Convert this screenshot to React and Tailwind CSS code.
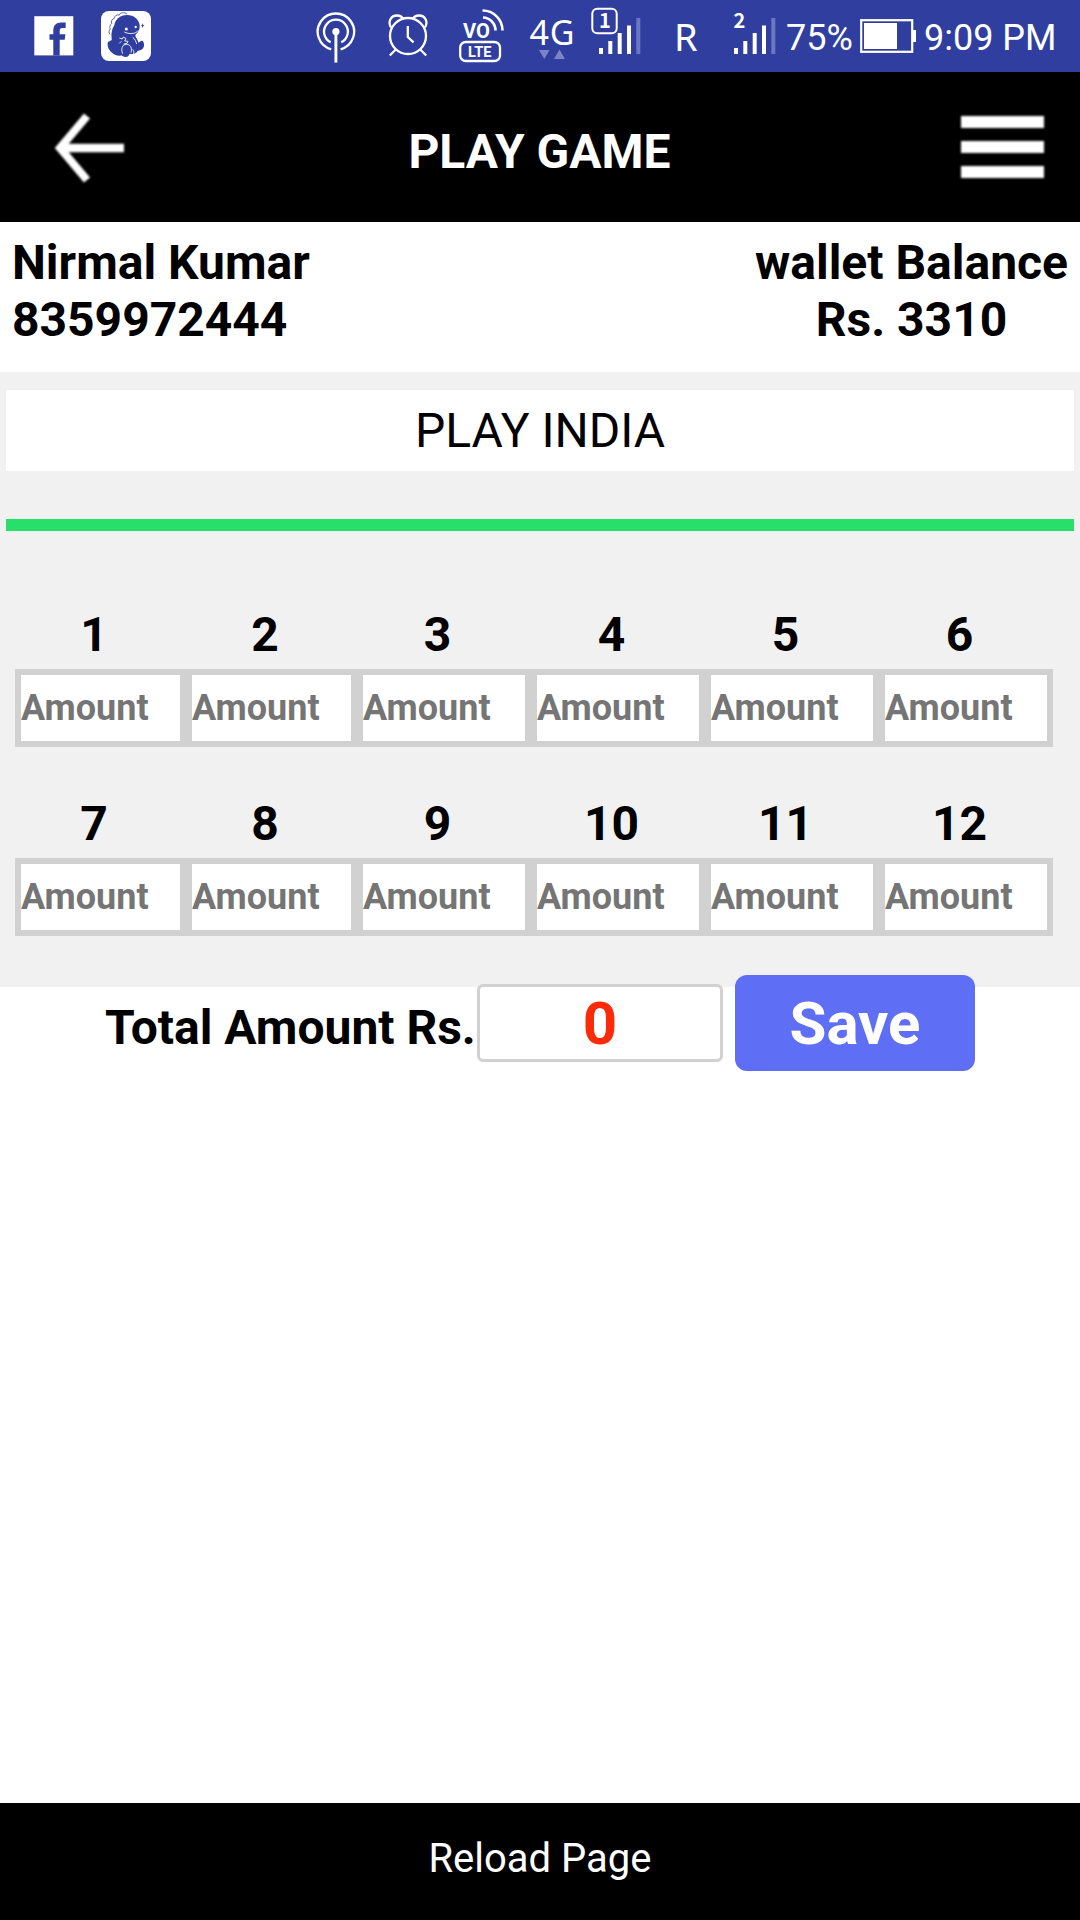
import React, { useState } from 'react';

const FacebookIcon = () => (
    <svg className="ml-[34px] h-[72px] w-10 shrink-0" viewBox="34 0 40 72">
        <rect x="34.3" y="16.2" width="39" height="39.2" fill="#fff" />
        <path
            d="M53.3 55.5V39.8h-3.8v-5.6h3.8v-3.4c0-5.4 2.8-8.4 7.8-8.4h4.6v5.7h-3.2c-2.2 0-2.8 1-2.8 3v3.1h5.7l-.7 5.6h-5v15.7z"
            fill="#303f9f"
        />
    </svg>
);

const DinoIcon = () => (
    <svg className="ml-[27px] h-[72px] w-[50px] shrink-0" viewBox="303 0 150 216">
        <rect x="303" y="33" width="150" height="150" rx="24" fill="#fff" />
        {/* head, body and feet */}
        <g fill="#303f9f">
            <ellipse cx="381" cy="79" rx="38" ry="34" />
            <path d="M343 76c-8 12-10 26-8 40 0 22 10 34 26 42 3 9 9 13 16 13 8 0 11-7 12-10 8 3 18 1 24-8 8-14 4-28-6-42l-4-26z" />
            <path d="M336 120c-4 3-12 3-13 9-2 14 8 28 22 35 8 4 18 4 24 0l-8-26z" />
            <path d="M412 152c10 1 18-5 20-14 1-6-1-14-5-16-5-1-9 6-15 8z" />
            <path d="M428 69l1.5 6 4 2-4 2-1.500 6-1.500-6-4-2 4-2z" />
        </g>
        <path
            d="M381 42c-8-6-20-5-23 3-8-2-15 3-15 10-7 2-11 9-8 16-6 4-7 11-4 16-5 5-5 11-1 16"
            fill="none" stroke="#303f9f" strokeWidth="2.4"
        />
        <circle cx="379" cy="87" r="4.5" fill="#fff" />
        <circle cx="407" cy="81" r="3.5" fill="#fff" />
        <path
            d="M373 96c13 7 34 7 42-5M358 114l9 3 3-6 8 5-4 7 10 1-3 6-10 2M364 124l-6 6M370 136c-6 8-6 16-2 25M370 136c14-9 29 2 23 22M398 148c6 8 4 14-2 17M398 112c8 5 10 14 12 20"
            fill="none" stroke="#fff" strokeWidth="2.6"
        />
    </svg>
);

const HotspotIcon = () => (
    <svg className="ml-auto h-[72px] w-10 shrink-0" viewBox="316 0 40 72" fill="none" stroke="#fff" strokeWidth="2.3">
        <path d="M331.2 49.3A18.2 18.2 0 1 1 340.6 49.3" />
        <path d="M330.7 42.3A11.9 11.9 0 1 1 341.2 42.3" />
        <circle cx="335.9" cy="31.6" r="3.6" fill="#fff" stroke="none" />
        <path d="M335.9 32v30.6" strokeWidth="2.9" />
    </svg>
);

const AlarmIcon = () => (
    <svg className="ml-8 h-[72px] w-10 shrink-0" viewBox="388 0 40 72" fill="none" stroke="#fff" strokeWidth="2.3">
        <circle cx="408" cy="36" r="18" />
        <path d="M391 27.5c-3.5-6 0-12 6-12 2.7 0 5 1 6 3.2M425 27.5c3.5-6 0-12-6-12-2.7 0-5 1-6 3.2" />
        <path d="M395.8 49.5l-6 6M420.2 49.5l6 6" />
        <path d="M407.8 26v11l5.8 5.4" />
    </svg>
);

const VolteIcon = () => (
    <svg className="ml-[31px] h-[72px] w-[46px] shrink-0" viewBox="459 0 46 72" fill="none" stroke="#fff">
        <path d="M482.500 10.500A20 20 0 0 1 502.500 30.500M483 17.500A13 13 0 0 1 495.500 30.500" strokeWidth="2.600" />
        <rect x="460.200" y="42" width="39.800" height="19" rx="5.500" strokeWidth="2.300" />
        <text x="463" y="37.800" textLength="27" lengthAdjust="spacingAndGlyphs" className="font-[Roboto] text-[21px] font-bold" fill="#fff" stroke="none">VO</text>
        <text x="468" y="57.200" textLength="23.500" lengthAdjust="spacingAndGlyphs" className="font-[Roboto] text-[15px] font-bold" fill="#fff" stroke="none">LTE</text>
    </svg>
);

const DataIcon = () => (
    <svg className="ml-6 h-[72px] w-[46px] shrink-0" viewBox="529 0 46 72">
        <text x="529.5" y="44.5" textLength="45" className="font-['Noto_Sans'] text-[34px]" fill="#fff">4G</text>
        <path d="M539 50h10.500l-5.200 9zM554 59h11l-5.500-9.500z" fill="#7b85c6" />
    </svg>
);

const bars = [
    { x: 0, h: 6 },
    { x: 9.3, h: 13 },
    { x: 18.7, h: 21 },
    { x: 28, h: 28.5 },
    { x: 37.3, h: 36 },
];

const SignalBars = ({ left }) =>
    bars.map((bar, i) => (
        <rect
            key={bar.x}
            x={left + bar.x}
            y={54 - bar.h}
            width="4"
            height={bar.h}
            fill={i === 4 ? '#6b77c0' : '#fff'}
        />
    ));

const SimOneIcon = () => (
    <svg className="ml-4 h-[72px] w-[50px] shrink-0" viewBox="591 0 50 72">
        <SignalBars left={599} />
        <rect x="592.3" y="8.800" width="24.400" height="24.400" rx="5" fill="#303f9f" stroke="#fff" strokeWidth="2" />
        <text x="599" y="28.200" className="font-['Noto_Sans_CJK_SC'] text-[20px] font-bold" fill="#fff">1</text>
    </svg>
);

const SimTwoIcon = () => (
    <svg className="ml-[34px] h-[72px] w-[43px] shrink-0" viewBox="733 0 43 72">
        <text x="733.5" y="28" className="font-['Noto_Sans_CJK_SC'] text-[20px] font-bold" fill="#fff">2</text>
        <SignalBars left={734} />
    </svg>
);

const BatteryIcon = () => (
    <svg className="ml-2 h-[72px] w-[57px] shrink-0" viewBox="859 0 57 72">
        <rect x="861.2" y="20.2" width="51" height="31.6" fill="none" stroke="#fff" strokeWidth="2.2" />
        <rect x="864" y="23" width="33" height="26" fill="#fff" />
        <rect x="912" y="30" width="4" height="12" fill="#fff" />
    </svg>
);

const StatusBar = () => (
    <div className="flex h-[72px] shrink-0 items-center bg-[#303f9f] pr-[25px] text-[36px] leading-[72px] text-white">
        <FacebookIcon />
        <DinoIcon />
        <HotspotIcon />
        <AlarmIcon />
        <VolteIcon />
        <DataIcon />
        <SimOneIcon />
        <span className="ml-[33px] w-[25px] font-['Noto_Sans'] text-[38px] leading-[70px]">R</span>
        <SimTwoIcon />
        <span className="ml-[10px] w-[65px] whitespace-nowrap pt-1">75%</span>
        <BatteryIcon />
        <span className="ml-2 w-[131px] whitespace-nowrap pt-1">9:09 PM</span>
    </div>
);

const Header = () => (
    <header className="flex h-[150px] shrink-0 items-center justify-between bg-black pl-[54px] pr-9 text-white">
        <button className="w-[64px] pt-1" aria-label="Back">
            <svg className="h-[72px] w-[72px] blur-[0.8px]" viewBox="0 0 72 72" fill="none" stroke="#fff">
                <path d="M33 3L6 35l27 32" strokeWidth="8" />
                <path d="M6 35h64" strokeWidth="8.5" />
            </svg>
        </button>
        <h1 className="pt-[9px] text-[48px] font-bold leading-[56px]">PLAY GAME</h1>
        <button className="flex w-[83px] flex-col gap-[13px] blur-[1px]" aria-label="Menu">
            <span className="h-3 w-full bg-white" />
            <span className="h-3 w-full bg-white" />
            <span className="h-3 w-full bg-white" />
        </button>
    </header>
);

const AmountCell = ({ number, value, onChange }) => (
    <div className="flex flex-col">
        <label className="pb-[6px] pr-[13px] text-center text-[48px] font-bold leading-[56px]">{number}</label>
        <input
            className="h-[78px] w-full border-[6px] border-[#d1d1d1] bg-white text-[36px] font-bold outline-none placeholder:text-[#757575] placeholder:opacity-100"
            placeholder="Amount"
            value={value}
            onChange={(e) => onChange(number, e.target.value)}
        />
    </div>
);

const App = () => {
    const [amounts, setAmounts] = useState({});

    const handleChange = (number, value) => {
        setAmounts({ ...amounts, [number]: value });
    };

    const total = Object.values(amounts).reduce((sum, v) => sum + (Number(v) || 0), 0);

    return (
        <div className="flex h-[1920px] w-[1080px] flex-col overflow-hidden bg-white font-[Roboto,sans-serif] text-black">
            <StatusBar />
            <Header />

            <div className="flex h-[150px] shrink-0 justify-between px-3 pt-3 text-[48px] font-bold leading-[57px]">
                <div>
                    <p>Nirmal Kumar</p>
                    <p>8359972444</p>
                </div>
                <div className="text-center">
                    <p>wallet Balance</p>
                    <p>Rs. 3310</p>
                </div>
            </div>

            <main className="h-[615px] shrink-0 bg-[#f1f1f1] px-[6px] pt-[18px]">
                <h2 className="h-[81px] bg-white text-center text-[48px] leading-[81px]">PLAY INDIA</h2>
                <div className="mt-12 h-3 bg-[#26e06a]" />

                <div className="ml-[9px] mt-[76px] grid w-[1038px] grid-cols-[171px_171px_174px_174px_174px_174px] gap-y-[49px]">
                    {[1, 2, 3, 4, 5, 6, 7, 8, 9, 10, 11, 12].map((n) => (
                        <AmountCell key={n} number={n} value={amounts[n] || ''} onChange={handleChange} />
                    ))}
                </div>
            </main>

            {/* Total row overlaps the bottom edge of the grey panel */}
            <div className="relative -mt-3 flex h-24 shrink-0 items-center pl-[105px]">
                <span className="w-[372px] whitespace-nowrap pt-[9px] text-[48px] font-bold leading-[56px]">Total Amount Rs.</span>
                <div className="h-[78px] w-[246px] rounded-[6px] border-[3px] border-[#d1d1d1] bg-white text-center text-[60px] font-bold leading-[74px] text-[#f92b08]">
                    {total}
                </div>
                <button className="ml-3 h-24 w-60 rounded-xl bg-[#5e6ff5] pt-[2px] text-[60px] font-bold leading-[94px] text-white">Save</button>
            </div>

            <footer className="mt-auto h-[117px] shrink-0 bg-black text-center text-[40px] leading-[111px] text-white">
                Reload Page
            </footer>
        </div>
    );
};

export default App;
